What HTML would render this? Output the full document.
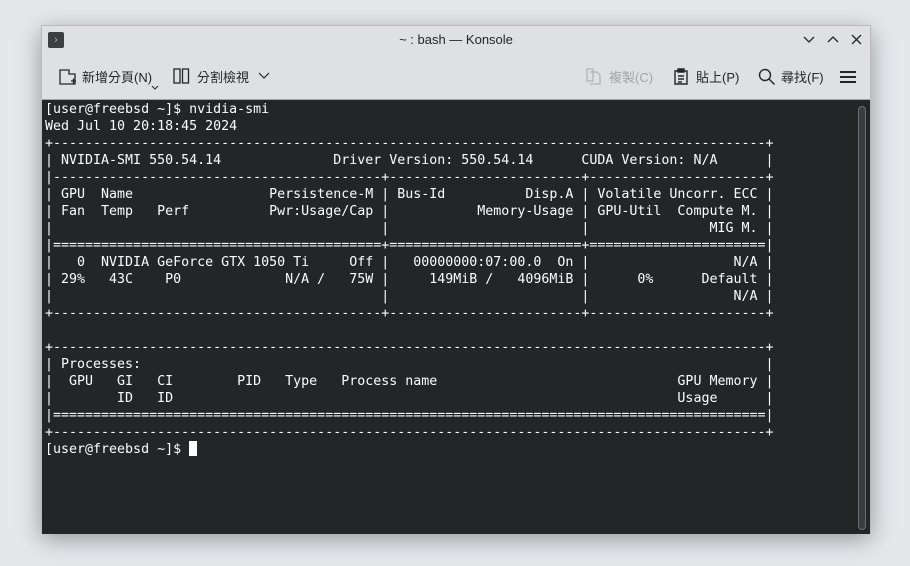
<!DOCTYPE html>
<html><head><meta charset="utf-8"><style>
html,body{margin:0;padding:0;width:910px;height:566px;overflow:hidden;background:#e4e8eb;font-family:"Liberation Sans","Noto Sans CJK TC",sans-serif;}
.win{position:absolute;left:41px;top:25px;width:830px;height:508px;background:#dee0e2;box-shadow:0 6px 22px rgba(0,0,0,0.35);border:1px solid #b8babc;box-sizing:border-box;}
.title{position:absolute;left:0;top:0;width:100%;height:28px;text-align:center;line-height:28px;font-size:13px;color:#232627;}
.tb{position:absolute;top:28px;height:45px;left:0;width:100%;font-size:13px;color:#232627;}
.it{position:absolute;top:14px;height:18px;line-height:18px;font-family:"Noto Sans CJK TC",sans-serif;font-size:13px;}
.term{position:absolute;left:0;top:73px;width:828px;height:434px;background:#232627;border-top:1px solid #a0a2a4;}
pre{margin:0;position:absolute;left:3px;top:1px;font-family:"DejaVu Sans Mono",monospace;font-size:13.3px;line-height:17px;color:#fcfcfc;}
.sb{position:absolute;left:816px;top:6px;width:6px;height:422px;border:1px solid #6a6d70;border-radius:4px;background:#3a3d40;}
.cur{display:inline-block;width:8px;height:15px;background:#fcfcfc;vertical-align:-3px;}
</style></head><body>
<div class="win">
 <div class="title">~ : bash — Konsole</div>
 <div style="position:absolute;left:6px;top:6px;width:16px;height:16px;background:#3b3f42;border-radius:2px;color:#aaa;font-size:11px;line-height:16px;text-align:center">›</div>
 <svg style="position:absolute;left:760px;top:7px" width="64" height="14" viewBox="0 0 64 14" fill="none" stroke="#232627" stroke-width="1.3"><path d="M2 4l5 5 5-5"/><path d="M26 9l5-5 5 5"/><path d="M50 2l9 9M59 2l-9 9"/></svg>
 <div class="tb">
  <svg style="position:absolute;left:17px;top:14px" width="18" height="18" fill="none" stroke="#232627" stroke-width="1.3"><path d="M1 2h9v4h6v10H1z"/><path d="M12 13h5M14.5 10.5v5"/></svg>
  <div class="it" style="left:40px">新增分頁<span style="font-family:'Liberation Sans'">(N)</span></div>
  <svg style="position:absolute;left:109px;top:31px" width="8" height="5" fill="none" stroke="#232627"><path d="M1 1l3 3 3-3"/></svg>
  <svg style="position:absolute;left:131px;top:14px" width="17" height="17" fill="none" stroke="#232627" stroke-width="1.3"><rect x="1" y="1" width="6" height="14"/><rect x="9.5" y="1" width="6" height="14"/></svg>
  <div class="it" style="left:155px">分割檢視</div>
  <svg style="position:absolute;left:216px;top:18px" width="12" height="8" fill="none" stroke="#232627" stroke-width="1.2"><path d="M1 1l5 5 5-5"/></svg>
  <svg style="position:absolute;left:544px;top:14px" width="16" height="17" fill="none" stroke="#b0b2b4" stroke-width="1.2"><path d="M1 1h6v12H1z"/><path d="M4 4h7l3 3v9H4"/></svg>
  <div class="it" style="left:567px;color:#a3a5a7">複製<span style="font-family:'Liberation Sans'">(C)</span></div>
  <svg style="position:absolute;left:631px;top:14px" width="16" height="17" fill="none" stroke="#232627" stroke-width="1.4"><path d="M2 3h12v13H2z"/><path d="M5 1h6v3H5z" fill="#232627"/><path d="M5 8h6M5 11h6M5 14h4"/></svg>
  <div class="it" style="left:654px">貼上<span style="font-family:'Liberation Sans'">(P)</span></div>
  <svg style="position:absolute;left:716px;top:14px" width="18" height="18" fill="none" stroke="#232627" stroke-width="1.4"><circle cx="7" cy="7" r="5.5"/><path d="M11 11l5.5 5.5"/></svg>
  <div class="it" style="left:739px">尋找<span style="font-family:'Liberation Sans'">(F)</span></div>
  <svg style="position:absolute;left:797px;top:16px" width="18" height="14" stroke="#232627" stroke-width="2"><path d="M1 2h16M1 7h16M1 12h16"/></svg>
 </div>
 <div class="term">
<pre>[user@freebsd ~]$ nvidia-smi
Wed Jul 10 20:18:45 2024
+-----------------------------------------------------------------------------------------+
| NVIDIA-SMI 550.54.14              Driver Version: 550.54.14      CUDA Version: N/A      |
|-----------------------------------------+------------------------+----------------------+
| GPU  Name                 Persistence-M | Bus-Id          Disp.A | Volatile Uncorr. ECC |
| Fan  Temp   Perf          Pwr:Usage/Cap |           Memory-Usage | GPU-Util  Compute M. |
|                                         |                        |               MIG M. |
|=========================================+========================+======================|
|   0  NVIDIA GeForce GTX 1050 Ti     Off |   00000000:07:00.0  On |                  N/A |
| 29%   43C    P0             N/A /   75W |     149MiB /   4096MiB |      0%      Default |
|                                         |                        |                  N/A |
+-----------------------------------------+------------------------+----------------------+

+-----------------------------------------------------------------------------------------+
| Processes:                                                                              |
|  GPU   GI   CI        PID   Type   Process name                              GPU Memory |
|        ID   ID                                                               Usage      |
|=========================================================================================|
+-----------------------------------------------------------------------------------------+
[user@freebsd ~]$ <span class="cur"></span></pre>
  <div class="sb"></div>
 </div>
</div>
</body></html>
